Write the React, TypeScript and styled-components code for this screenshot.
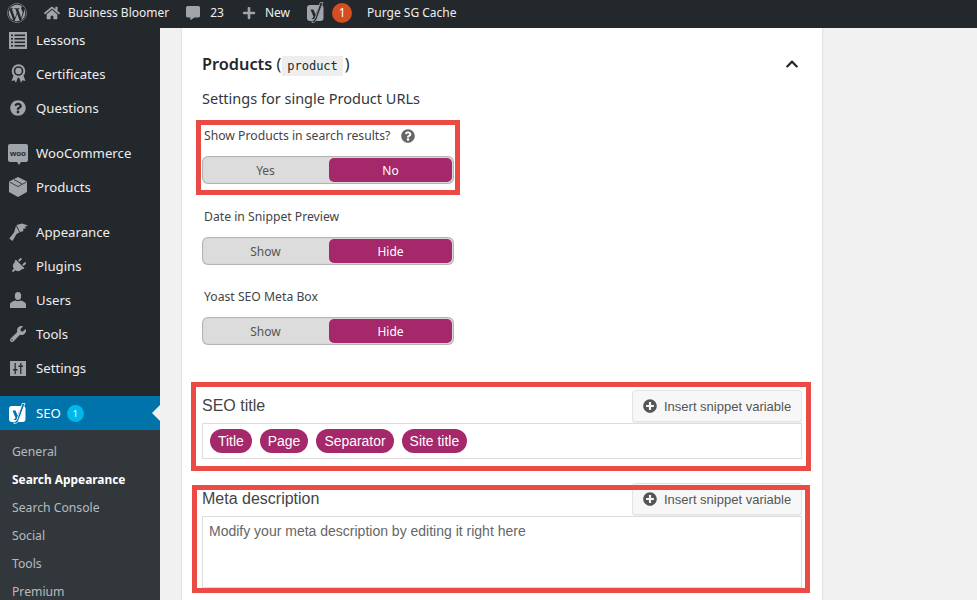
import React from 'react';
import styled, { createGlobalStyle } from 'styled-components';
import {
  FaWordpress,
  FaHome,
  FaCommentAlt,
  FaPlus,
  FaQuestionCircle,
  FaPlug,
  FaWrench,
  FaPlusCircle,
  FaChevronUp,
} from 'react-icons/fa';

const GlobalStyle = createGlobalStyle`
  html, body {
    margin: 0;
    padding: 0;
    height: 600px;
    overflow: hidden;
    background: #f1f1f1;
  }
  * {
    box-sizing: border-box;
  }
`;

const uiFont = `'Noto Sans', 'Open Sans', sans-serif`;
const arial = `'Liberation Sans', Arial, sans-serif`;

const ListIcon = () => (
  <svg width="18" height="17" viewBox="0 0 18 17">
    <rect width="18" height="17" fill="currentColor" />
    {[2.5, 6, 9.5, 13].map((y) => (
      <g key={y} fill="#23282d">
        <rect x="2" y={y} width="2" height="1.6" />
        <rect x="5.5" y={y} width="10.5" height="1.6" />
      </g>
    ))}
  </svg>
);

const AwardIcon = () => (
  <svg width="15" height="20" viewBox="0 0 15 20">
    <path d="M3.2 10 L0.5 17 L3.5 16.2 L5 18.8 L7 13 Z M11.8 10 L14.5 17 L11.5 16.2 L10 18.8 L8 13 Z" fill="currentColor" />
    <circle cx="7.5" cy="7" r="5.8" fill="none" stroke="currentColor" strokeWidth="2" />
    <circle cx="7.5" cy="7" r="3.2" fill="currentColor" />
  </svg>
);

const BoxIcon = () => (
  <svg width="18" height="20" viewBox="0 0 18 20">
    <path d="M9 0 L18 4.6 V15 L9 20 L0 15 V4.6 Z" fill="currentColor" />
    <path d="M0.5 5 L9 9.6 L17.5 5 M5 2.6 L13 7" fill="none" stroke="#23282d" strokeWidth="0.8" />
  </svg>
);

const BrushIcon = () => (
  <svg width="19" height="18" viewBox="0 0 19 18">
    <path d="M7.5 2 L13 0.5 L19 2.5 L15.5 4 L17.5 5 L14 6 L14.5 8 L11 9 Z" fill="currentColor" />
    <path d="M7 3 L10.5 9.5 L7.5 11 L3.5 18 L0.3 15.5 L5 9.5 Z" fill="currentColor" />
  </svg>
);

const UserIcon = () => (
  <svg width="16" height="16" viewBox="0 0 16 16">
    <ellipse cx="8" cy="4" rx="3.2" ry="4" fill="currentColor" />
    <path d="M0 16 V12.5 C0 10.5 3 9 5.5 8.5 C7 9.6 9 9.6 10.5 8.5 C13 9 16 10.5 16 12.5 V16 Z" fill="currentColor" />
  </svg>
);

const SlidersIcon = () => (
  <svg width="16" height="15" viewBox="0 0 16 15">
    <rect width="16" height="15" fill="currentColor" />
    <g fill="#23282d">
      <rect x="4.6" y="2" width="1.2" height="11" />
      <rect x="3" y="8" width="4.4" height="1.5" />
      <rect x="10.2" y="2" width="1.2" height="11" />
      <rect x="8.6" y="4.5" width="4.4" height="1.5" />
    </g>
  </svg>
);

const YoastIcon: React.FC<{ cut: string }> = ({ cut }) => (
  <svg width="18" height="21" viewBox="0 0 18 21">
    <rect x="0" y="3" width="16.5" height="16" rx="3" fill="currentColor" />
    <path d="M3.5 7.5 H6.5 L8.5 12.5 L10.5 7.5 H11 L7.5 17 H4.5 L6.6 15 Z" fill={cut} />
    <path d="M13.2 0.5 H16 L9.5 18 C8.5 20 6.5 20.5 5 20.5 V18.5 C6.5 18.5 7.2 18 8 16.5 Z" fill={cut} stroke="currentColor" strokeWidth="0.8" />
  </svg>
);

function WooIcon() {
  return (
    <WooBadge>
      <span>woo</span>
    </WooBadge>
  );
}

function PlugIcon() {
  return (
    <TiltedIcon>
      <FaPlug size={16} />
    </TiltedIcon>
  );
}

const menuGroups = [
  [
    { label: 'Lessons', icon: <ListIcon /> },
    { label: 'Certificates', icon: <AwardIcon /> },
    { label: 'Questions', icon: <FaQuestionCircle size={16} /> },
  ],
  [
    { label: 'WooCommerce', icon: <WooIcon /> },
    { label: 'Products', icon: <BoxIcon /> },
  ],
  [
    { label: 'Appearance', icon: <BrushIcon /> },
    { label: 'Plugins', icon: <PlugIcon /> },
    { label: 'Users', icon: <UserIcon /> },
    { label: 'Tools', icon: <FaWrench size={16} /> },
    { label: 'Settings', icon: <SlidersIcon /> },
  ],
];

const subItems = ['General', 'Search Appearance', 'Search Console', 'Social', 'Tools', 'Premium'];

type ToggleProps = {
  off: string;
  on: string;
};

const Toggle: React.FC<ToggleProps> = ({ off, on }) => (
  <ToggleWrap>
    <ToggleOption>{off}</ToggleOption>
    <ToggleOption $active>{on}</ToggleOption>
  </ToggleWrap>
);

const App: React.FC = () => {
  return (
    <>
      <GlobalStyle />
      <AdminBar>
        <BarIcon $mr={17}>
          <FaWordpress size={20} />
        </BarIcon>
        <BarIcon $mr={8}>
          <FaHome size={16} />
        </BarIcon>
        <BarText $mr={17}>Business Bloomer</BarText>
        <BarIcon $mr={10}>
          <FaCommentAlt size={14} />
        </BarIcon>
        <BarText $mr={18}>23</BarText>
        <BarIcon $mr={9}>
          <FaPlus size={14} />
        </BarIcon>
        <BarText $mr={17}>New</BarText>
        <BarIcon $mr={7}>
          <YoastIcon cut="#23282d" />
        </BarIcon>
        <BarBadge>1</BarBadge>
        <BarText>Purge SG Cache</BarText>
      </AdminBar>
      <Page>
        <Sidebar>
          <Menu>
            {menuGroups.map((group, i) => (
              <MenuGroup key={i}>
                {group.map((item) => (
                  <MenuItem key={item.label}>
                    <MenuIcon>{item.icon}</MenuIcon>
                    {item.label}
                  </MenuItem>
                ))}
              </MenuGroup>
            ))}
            <MenuGroup>
              <ActiveItem>
                <MenuIcon>
                  <YoastIcon cut="#0073aa" />
                </MenuIcon>
                SEO
                <SeoCount>1</SeoCount>
                <ActiveArrow />
              </ActiveItem>
              <SubMenu>
                {subItems.map((item) => (
                  <SubItem key={item} $current={item === 'Search Appearance'}>
                    {item}
                  </SubItem>
                ))}
              </SubMenu>
            </MenuGroup>
          </Menu>
        </Sidebar>
        <Main>
          <Card>
            <TitleRow>
              <CardTitle>
                Products <TitleParen>(</TitleParen>
                <Code>product</Code>
                <TitleParen>)</TitleParen>
              </CardTitle>
              <Collapse>
                <FaChevronUp size={14} />
              </Collapse>
            </TitleRow>
            <Subtitle>Settings for single Product URLs</Subtitle>

            <ToggleField $mb={23}>
              <Highlight $top={-6} $left={-6} $right={-6} $bottom={-11} />
              <FieldLabel>
                <span>Show Products in search results?</span>
                <HelpIcon>
                  <FaQuestionCircle size={14} />
                </HelpIcon>
              </FieldLabel>
              <Toggle off="Yes" on="No" />
            </ToggleField>

            <ToggleField $mb={22}>
              <FieldLabel>Date in Snippet Preview</FieldLabel>
              <Toggle off="Show" on="Hide" />
            </ToggleField>

            <ToggleField $mb={45}>
              <FieldLabel>Yoast SEO Meta Box</FieldLabel>
              <Toggle off="Show" on="Hide" />
            </ToggleField>

            <EditorField $mb={24}>
              <Highlight $top={-8} $left={-11} $right={-9} $bottom={-12} />
              <EditorHead>
                <EditorLabel>SEO title</EditorLabel>
                <SnippetButton>
                  <FaPlusCircle size={14} />
                  Insert snippet variable
                </SnippetButton>
              </EditorHead>
              <TitleInput>
                <Pill>Title</Pill>
                <Pill>Page</Pill>
                <Pill>Separator</Pill>
                <Pill>Site title</Pill>
              </TitleInput>
            </EditorField>

            <EditorField $mb={0}>
              <Highlight $top={2} $left={-10} $right={-8} $bottom={-5} />
              <EditorHead>
                <EditorLabel>Meta description</EditorLabel>
                <SnippetButton>
                  <FaPlusCircle size={14} />
                  Insert snippet variable
                </SnippetButton>
              </EditorHead>
              <DescriptionInput>Modify your meta description by editing it right here</DescriptionInput>
            </EditorField>
          </Card>
        </Main>
      </Page>
    </>
  );
};

export default App;

const AdminBar = styled.header`
  position: relative;
  z-index: 2;
  display: flex;
  align-items: center;
  height: 28px;
  padding: 0 0 3px 7px;
  background: #23282d;
  font-family: ${uiFont};
  font-size: 12px;
  color: #eee;
`;

const BarIcon = styled.span<{ $mr: number }>`
  display: flex;
  align-items: center;
  margin-right: ${(p) => p.$mr}px;
  color: #a0a5aa;
`;

const BarText = styled.span<{ $mr?: number }>`
  margin-right: ${(p) => p.$mr ?? 0}px;
  white-space: nowrap;
`;

const BarBadge = styled.span`
  display: flex;
  align-items: center;
  justify-content: center;
  width: 20px;
  height: 20px;
  margin-right: 15px;
  border-radius: 50%;
  background: #d54e21;
  color: #fff;
  font-size: 12px;
`;

const Page = styled.div`
  display: flex;
  height: 572px;
  overflow: hidden;
`;

const Sidebar = styled.nav`
  flex: 0 0 160px;
  width: 160px;
  background: #23282d;
  font-family: ${uiFont};
  overflow: hidden;
`;

const Menu = styled.div`
  display: flex;
  flex-direction: column;
  gap: 11px;
  margin-top: -5px;
`;

const MenuGroup = styled.div`
  display: flex;
  flex-direction: column;
`;

const MenuItem = styled.div`
  display: flex;
  align-items: center;
  height: 34px;
  font-size: 13.2px;
  color: #eee;
  white-space: nowrap;
`;

const MenuIcon = styled.span`
  display: flex;
  align-items: center;
  justify-content: center;
  flex: 0 0 36px;
  width: 36px;
  color: #a0a5aa;
`;

const TiltedIcon = styled.span`
  display: flex;
  transform: rotate(45deg);
`;

const WooBadge = styled.span`
  position: relative;
  display: flex;
  align-items: center;
  justify-content: center;
  width: 20px;
  height: 18px;
  border-radius: 2px;
  background: #a0a5aa;
  color: #23282d;
  font-family: ${arial};
  font-size: 8px;
  font-weight: bold;

  &::after {
    content: '';
    position: absolute;
    left: 9px;
    bottom: -3px;
    border-top: 3px solid #a0a5aa;
    border-left: 2px solid transparent;
    border-right: 2px solid transparent;
  }
`;

const ActiveItem = styled(MenuItem)`
  position: relative;
  background: #0073aa;
  color: #fff;

  ${MenuIcon} {
    color: #fff;
  }
`;

const SeoCount = styled.span`
  display: flex;
  align-items: center;
  justify-content: center;
  width: 17px;
  height: 17px;
  margin-left: 6px;
  border-radius: 50%;
  background: #00b9eb;
  color: #fff;
  font-size: 9px;
`;

const ActiveArrow = styled.span`
  position: absolute;
  right: 0;
  top: 9px;
  border-top: 8px solid transparent;
  border-bottom: 8px solid transparent;
  border-right: 8px solid #f1f1f1;
`;

const SubMenu = styled.div`
  display: flex;
  flex-direction: column;
  padding: 7px 0;
  background: #32373c;
`;

const SubItem = styled.div<{ $current?: boolean }>`
  display: flex;
  align-items: center;
  height: 28px;
  padding-left: 12px;
  font-size: ${(p) => (p.$current ? 11.9 : 12.2)}px;
  font-weight: ${(p) => (p.$current ? 700 : 400)};
  color: ${(p) => (p.$current ? '#fff' : 'rgba(240, 245, 250, 0.7)')};
  white-space: nowrap;
`;

const Main = styled.main`
  flex: 1;
  padding-left: 22px;
  background: #f1f1f1;
`;

const Card = styled.section`
  width: 640px;
  height: 572px;
  padding: 23px 20px 0;
  background: #fff;
  box-shadow: 0 0 2px rgba(0, 0, 0, 0.18);
  font-family: ${uiFont};
  color: #444;
`;

const TitleRow = styled.div`
  display: flex;
  align-items: center;
  justify-content: space-between;
  height: 26px;
  margin-bottom: 11px;
`;

const CardTitle = styled.h2`
  margin: 0;
  font-size: 16.3px;
  font-weight: 600;
  color: #23282d;
  white-space: nowrap;
`;

const TitleParen = styled.span`
  font-size: 16px;
  font-weight: 400;
`;

const Code = styled.code`
  margin: 0 2px 0 1px;
  padding: 3px 5px;
  background: #eee;
  font-family: 'DejaVu Sans Mono', 'Liberation Mono', monospace;
  font-size: 12px;
  font-weight: 400;
  color: #23282d;
`;

const Collapse = styled.span`
  display: flex;
  margin-right: 3px;
  color: #23282d;
`;

const Subtitle = styled.div`
  height: 20px;
  margin-bottom: 18px;
  font-size: 14.5px;
  line-height: 20px;
  color: #32373c;
`;

const ToggleField = styled.div<{ $mb: number }>`
  position: relative;
  width: 252px;
  margin-bottom: ${(p) => p.$mb}px;
`;

const FieldLabel = styled.div`
  display: flex;
  align-items: center;
  height: 20px;
  margin-bottom: 10px;
  padding: 0 0 1px 2px;
  font-size: 12.2px;
  color: #444;
`;

const HelpIcon = styled.span`
  display: flex;
  margin-left: 11px;
  color: #666;
`;

const ToggleWrap = styled.div`
  display: flex;
  height: 28px;
  padding: 2px 2px 2px 0;
  border-radius: 6px;
  background: #dcdcdc;
  box-shadow: inset 0 0 1px 1px rgba(0, 0, 0, 0.2);
`;

const ToggleOption = styled.div<{ $active?: boolean }>`
  display: flex;
  align-items: center;
  justify-content: center;
  flex: ${(p) => (p.$active ? '1' : '0 0 127px')};
  border-radius: 5px;
  background: ${(p) => (p.$active ? '#a4286a' : 'transparent')};
  color: ${(p) => (p.$active ? '#fff' : '#555')};
  font-size: 12px;
`;

const EditorField = styled.div<{ $mb: number }>`
  position: relative;
  margin-bottom: ${(p) => p.$mb}px;
`;

const EditorHead = styled.div`
  display: flex;
  align-items: flex-start;
  justify-content: space-between;
  height: 33px;
`;

const EditorLabel = styled.label`
  align-self: center;
  padding-bottom: 2px;
  font-family: ${arial};
  font-size: 16px;
  color: #444;
`;

const SnippetButton = styled.button`
  display: flex;
  align-items: center;
  gap: 7px;
  width: 170px;
  height: 32px;
  padding: 0 0 0 10px;
  border: 1px solid #e4e4e4;
  border-radius: 3px;
  background: #f7f7f7;
  box-shadow: 0 1px 0 rgba(0, 0, 0, 0.08);
  font-family: ${arial};
  font-size: 13px;
  color: #555;
  white-space: nowrap;

  svg {
    color: #555;
  }
`;

const TitleInput = styled.div`
  display: flex;
  align-items: center;
  gap: 8px;
  height: 36px;
  padding-left: 7px;
  border: 1px solid #ddd;
`;

const Pill = styled.span`
  display: flex;
  align-items: center;
  height: 24px;
  padding: 0 8px;
  border-radius: 12px;
  background: #a4286a;
  color: #fff;
  font-family: ${arial};
  font-size: 13.95px;
`;

const DescriptionInput = styled.div`
  height: 72px;
  padding: 6px;
  border: 1px solid #ddd;
  font-family: ${arial};
  font-size: 14px;
  line-height: 16px;
  color: #666;
`;

const Highlight = styled.div<{ $top: number; $left: number; $right: number; $bottom: number }>`
  position: absolute;
  top: ${(p) => p.$top}px;
  left: ${(p) => p.$left}px;
  right: ${(p) => p.$right}px;
  bottom: ${(p) => p.$bottom}px;
  border: 5px solid #ec4a45;
  pointer-events: none;
`;
